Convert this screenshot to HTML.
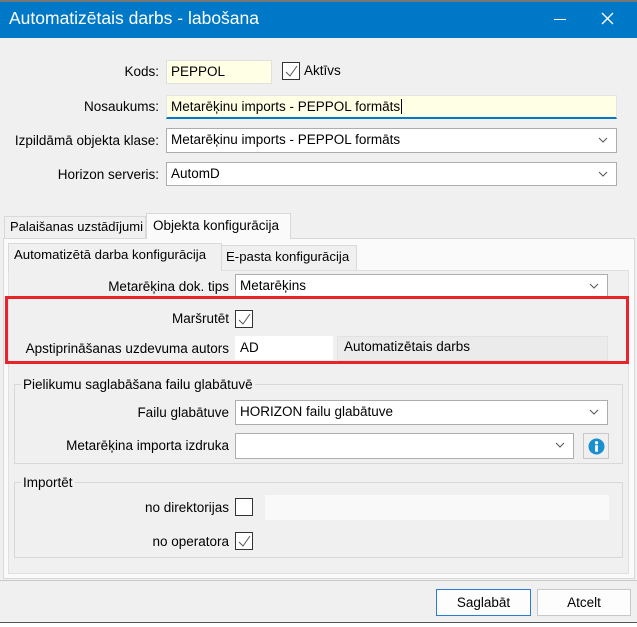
<!DOCTYPE html>
<html><head><meta charset="utf-8"><style>
*{box-sizing:border-box;margin:0;padding:0}
body{width:637px;height:627px;background:#f0f0f0;font-family:"Liberation Sans",sans-serif;font-size:13.5px;color:#000;position:relative;overflow:hidden}
.a{position:absolute;white-space:nowrap}
.lbl{position:absolute;text-align:right;white-space:nowrap;line-height:18px}
.in{position:absolute;border:1px solid #c8c8c8;background:#fff;padding-left:4px;line-height:22px}
.cb{position:absolute;width:18px;height:18px;border:1px solid #333;background:#fff}
.cb svg{position:absolute;left:2px;top:2px}
.dd{position:absolute;right:8px;top:8px}
.grp{position:absolute;border:1px solid #d8d8d8}
</style></head><body>
<div class="a" style="left:0;top:0;width:637px;height:2px;background:#777"></div>
<div class="a" style="left:0;top:2px;width:637px;height:36px;background:#0078c8"></div>
<div class="a" style="left:9px;top:8px;color:#fff;font-size:17.5px">Automatizētais darbs - labošana</div>
<div class="a" style="left:554px;top:19px;width:12px;height:1px;background:#fff"></div>
<svg class="a" style="left:601px;top:12px" width="13" height="13"><path d="M1 1L12 12M12 1L1 12" stroke="#fff" stroke-width="1.4"/></svg>

<div class="lbl" style="right:478px;top:63px">Kods:</div>
<div class="in" style="left:166px;top:60px;width:106px;height:24px;background:#ffffe6;border-color:#e0e0e0">PEPPOL</div>
<div class="cb" style="left:282px;top:62px"><svg width="13" height="13"><path d="M1 7L5 11L12 1" stroke="#555" fill="none" stroke-width="1"/></svg></div>
<div class="a" style="left:304px;top:63px">Aktīvs</div>

<div class="lbl" style="right:478px;top:98px">Nosaukums:</div>
<div class="in" style="left:166px;top:95px;width:451px;height:24px;background:#ffffe6;border-color:#e4e4e4;border-bottom:2px solid #0078c8">Metarēķinu imports - PEPPOL formāts<span style="border-left:1px solid #000;margin-left:1px"></span></div>

<div class="lbl" style="right:478px;top:132px">Izpildāmā objekta klase:</div>
<div class="in" style="left:166px;top:128px;width:451px;height:25px;border-color:#adadad">Metarēķinu imports - PEPPOL formāts<svg class="dd" width="10" height="6"><path d="M1 1L5 5L9 1" stroke="#555" fill="none"/></svg></div>

<div class="lbl" style="right:478px;top:166px">Horizon serveris:</div>
<div class="in" style="left:166px;top:162px;width:451px;height:24px;border-color:#adadad">AutomD<svg class="dd" width="10" height="6"><path d="M1 1L5 5L9 1" stroke="#555" fill="none"/></svg></div>

<!-- outer tabs -->
<div class="a" style="left:4px;top:216px;width:142px;height:23px;border:1px solid #d9d9d9;border-bottom:none;background:#f0f0f0;padding:2px 0 0 5px;font-size:13px">Palaišanas uzstādījumi</div>
<div class="a" style="left:146px;top:213px;width:145px;height:26px;border:1px solid #d9d9d9;border-bottom:none;background:#fafafa;padding:4px 0 0 6px;z-index:2">Objekta konfigurācija</div>
<div class="a" style="left:3px;top:238px;width:632px;height:341px;border:1px solid #d9d9d9;background:#fafafa"></div>
<div class="a" style="left:8px;top:243px;width:214px;height:28px;border:1px solid #d9d9d9;border-bottom:none;background:#f0f0f0;padding:3px 0 0 5px;z-index:2;font-size:13.2px">Automatizētā darba konfigurācija</div>
<div class="a" style="left:221px;top:245px;width:136px;height:25px;border:1px solid #d9d9d9;border-bottom:none;background:#f0f0f0;padding:3px 0 0 4px;font-size:13.2px">E-pasta konfigurācija</div>
<div class="a" style="left:8px;top:270px;width:621px;height:304px;border:1px solid #e0e0e0;background:#f0f0f0"></div>

<div class="lbl" style="right:408px;top:278px">Metarēķina dok. tips</div>
<div class="in" style="left:235px;top:274px;width:373px;height:24px;border-color:#adadad">Metarēķins<svg class="dd" width="10" height="6"><path d="M1 1L5 5L9 1" stroke="#555" fill="none"/></svg></div>

<div class="a" style="left:5px;top:296px;width:624px;height:68px;border:3px solid #e8242a"></div>
<div class="lbl" style="right:408px;top:310px">Maršrutēt</div>
<div class="cb" style="left:235px;top:310px"><svg width="13" height="13"><path d="M1 7L5 11L12 1" stroke="#555" fill="none" stroke-width="1"/></svg></div>
<div class="lbl" style="right:408px;top:340px">Apstiprināšanas uzdevuma autors</div>
<div class="in" style="left:235px;top:336px;width:98px;height:24px;border-color:#fff">AD</div>
<div class="in" style="left:337px;top:336px;width:271px;height:25px;background:#ebebeb;border-color:#e2e2e2;padding-left:6px;line-height:20px">Automatizētais darbs</div>

<div class="grp" style="left:14px;top:384px;width:609px;height:80px"></div>
<div class="a" style="left:21px;top:377px;background:#f0f0f0;padding:0 2px">Pielikumu saglabāšana failu glabātuvē</div>
<div class="lbl" style="right:408px;top:404px">Failu glabātuve</div>
<div class="in" style="left:235px;top:400px;width:373px;height:25px;border-color:#adadad">HORIZON failu glabātuve<svg class="dd" width="10" height="6"><path d="M1 1L5 5L9 1" stroke="#555" fill="none"/></svg></div>
<div class="lbl" style="right:408px;top:437px">Metarēķina importa izdruka</div>
<div class="in" style="left:235px;top:433px;width:339px;height:26px;border-color:#adadad"><svg class="dd" width="10" height="6"><path d="M1 1L5 5L9 1" stroke="#555" fill="none"/></svg></div>
<div class="a" style="left:583px;top:433px;width:26px;height:26px;border:1px solid #c8c8c8;background:#f0f0f0"><svg style="position:absolute;left:4px;top:4px" width="17" height="17"><circle cx="8.5" cy="8.5" r="8" fill="#1a8fd0"/><circle cx="8.5" cy="4.7" r="1.6" fill="#fff"/><rect x="7.1" y="7.2" width="2.8" height="6.5" fill="#fff"/></svg></div>

<div class="grp" style="left:14px;top:482px;width:609px;height:76px"></div>
<div class="a" style="left:21px;top:475px;background:#f0f0f0;padding:0 2px">Importēt</div>
<div class="lbl" style="right:408px;top:499px">no direktorijas</div>
<div class="cb" style="left:235px;top:498px"></div>
<div class="a" style="left:265px;top:495px;width:344px;height:25px;background:#f9f9f9"></div>
<div class="lbl" style="right:408px;top:533px">no operatora</div>
<div class="cb" style="left:235px;top:532px"><svg width="13" height="13"><path d="M1 7L5 11L12 1" stroke="#555" fill="none" stroke-width="1"/></svg></div>

<div class="a" style="left:0;top:580px;width:637px;height:1px;background:#c8c8c8"></div>
<div class="a" style="left:436px;top:589px;width:95px;height:27px;border:1px solid #2b7bd0;background:#fdfdfd;text-align:center;line-height:25px">Saglabāt</div>
<div class="a" style="left:537px;top:589px;width:94px;height:27px;border:1px solid #c8c8c8;background:#fdfdfd;text-align:center;line-height:25px">Atcelt</div>
<div class="a" style="left:0;top:622px;width:637px;height:1px;background:#555"></div>
<div class="a" style="left:0;top:623px;width:637px;height:4px;background:#fff"></div>
</body></html>
